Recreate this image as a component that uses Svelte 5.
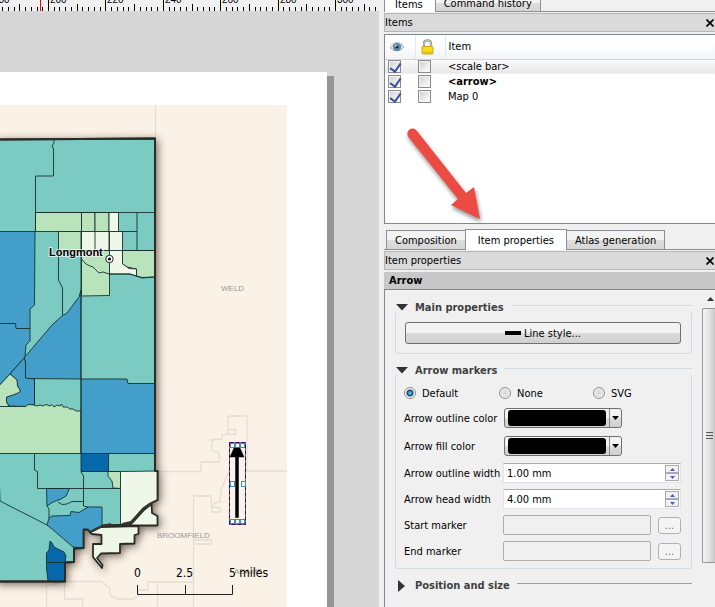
<script>
  const minorTicks = Array.from({ length: 67 }, (_, i) => {
    const n = i - 8;
    return { x: Math.round(48 + n * 5.74), top: n % 10 === 0 ? 0 : n % 5 === 0 ? 4 : 7 };
  });
  const rulerLabels = [180, 200, 220, 240, 260, 280, 300].map((value, i) => ({
    value,
    x: Math.round(50 + (i - 1) * 57.4)
  }));

  const teal = '#7bcbc3';
  const blue = '#439fc9';
  const navy = '#0868ac';
  const green = '#b9e4bb';
  const cream = '#eff8e8';

  const county =
    '-4,139.5 80,139 155,138.5 155,471 157.5,471 157.5,500 150,503.5 143,508.5 132,521.5 125,525 103,525.5 90,532 88,529.5 83.5,529.5 83.5,548 74,548.5 74,562 65,562.5 65,581.5 -4,581.5';
  const smallCream = '151.5,504 144,510 134,521 129,525.5 157.5,525.5 157.5,516 152,513';
  const lowerCream =
    '90,532.5 101,527 138.5,526 138.5,534 134.5,535 134.5,543.5 120,544 120,553 101,553.5 97,558 102.5,565 102,568 93,557 93,544 101.5,544 101.5,535 92,534';

  const zones = [
    [blue, '-4,231.5 35,231.5 34.5,305 30,309 30,341 26,345 25,357 10,374 -4,389'],
    [blue, '81,290 79,297 67,313 62,316 52,325 24,358 25.5,362 25.5,378.5 81,379'],
    [blue, '24,358 25.5,362 25.5,378 34.5,379 34.5,405 28,405 26,406.5 9,406 6.5,402 6.5,397 20.5,391 17.5,386 17,380 10,374'],
    [green, '-4,389 10,374 17,380 17.5,386 20.5,391 18,393 13,395 6.5,397 6.5,402 9,406.5 -4,406.5'],
    [green, '-4,406.5 26,406.5 28,404.5 34,405 37,406 40,405 43,406 46,404.5 50,406 52,404.5 54,407 57,405 60,406 61.5,404 63,407 67,407 70,409 73,409 76,411 81,411 81,453.5 -4,453.5'],
    [blue, '81,379 127,379 128,383.5 154.5,383.5 154.5,453.5 81,453.5'],
    [navy, '81,453.5 108.5,453.5 108.5,471.5 81,471.5'],
    [green, '108,471.5 120.5,471.5 120.5,488.5 113,488 112,481 108,476'],
    [cream, '120.5,471.5 157.5,471 157.5,500 150,503.5 143,508.5 132,521.5 125,525 120.5,524.5'],
    [blue, '46.5,488.5 69.5,488.5 66,496 61,499 53,502 47,506'],
    [blue, '47,525 49,518 52,516 70,515.5 71,511.5 79,512.5 88,507 102,507 102,526 90,532 88,529.5 83.5,529.5 83.5,548 73,547 52,529'],
    [navy, '50,541 52,543 54,547 64,552 66,556 65,563 65,581 48,581 46.5,568 46.5,553 49,550'],
    [green, '35.5,212.5 81.5,212.5 81.5,231.5 35.5,231.5'],
    [green, '81.5,212.5 95,212.5 95,231.5 81.5,231.5'],
    [green, '95,212.5 109,212.5 109,231.5 95,231.5'],
    [cream, '109,212.5 118.5,212.5 118.5,231.5 109,231.5'],
    [green, '58.5,231.5 81.5,231.5 81.5,250.5 58.5,250.5'],
    [cream, '81.5,231.5 109,231.5 109,250.5 81.5,250.5'],
    [green, '81.5,250.5 109.5,250.5 109.5,295.5 81.5,296'],
    [green, '122.5,250.5 154.5,250.5 154.5,277 142,277.5 136.5,276 136.5,269 127,267 122.5,264'],
    [cream, '109.5,231.5 122.5,231.5 122.5,264 127,267 129,268.5 136.5,269 136.5,276 130,274 109.5,274']
  ];

  const tractLines =
    'M54,139V143L52,146 53.5,149V176H35.5V212M35.5,212.5H155M35.5,212V232M137,212V250M58.5,250.5H155M95,231V250M118.5,231.5H137' +
    'M58.5,250V280L62.5,288V315M81.5,259L86,264 90,266 93,267 99,273 103,272 109,274 130,274 136,276 142,278 154,277' +
    'M0,323.5H15.5L16,328.5H30M34.5,379V405M81,231V453M108.5,453.5H155' +
    'M81,471.5H120M34.5,453V470L37.5,471.5V488.5H120.5M81,472L83.5,476V506L88,507M-1,471L0,501 47,525' +
    'M58,502L62,504.5 67,504 72,501.5H83.5M47,506L49,509V518M46.5,562.5H65';

  const boundaries =
    'M155.5,105V138M157,471.5H201V462H219V453L211,450 213,441 210,440 222,439V435L228,434V417L230,416H246L247,417V471H287' +
    'M228,429.5H235.5V434H228M229,471L221,490 220,502 214,503 213,507 220.5,508V512H212L211,496H193.5V607' +
    'M193.5,540H211.5V544H193.5M46.5,607V586L64,581.5H102L110,589V595L118,599H133L138,596V590H148V582H193M157.5,582V607M64.5,581V599H82.5V607';

  const handles = [
    [230, 443], [235, 443], [240, 443],
    [230, 481], [241, 481],
    [230, 519], [235, 519], [240, 519]
  ];

  let items = $state([
    { name: '<scale bar>', visible: true, locked: false },
    { name: '<arrow>', visible: true, locked: false, current: true },
    { name: 'Map 0', visible: true, locked: false }
  ]);
  let marker = $state('Default');
  let widths = $state([
    { id: 'outline-width', label: 'Arrow outline width', value: 1 },
    { id: 'head-width', label: 'Arrow head width', value: 4 }
  ]);
</script>

<main class="composer">
  <section class="canvas" aria-label="Map composition">
    <svg class="ruler" aria-hidden="true">
      {#each minorTicks as t}
        <rect x={t.x} y={t.top} width="1" height={11 - t.top} />
      {/each}
      {#each rulerLabels as l}
        <text x={l.x} y="3">{l.value}</text>
      {/each}
      <rect class="cursor" x="40" y="0" width="1" height="11" />
    </svg>
    <svg class="sheet" viewBox="0 11 379 596" preserveAspectRatio="xMinYMin slice">
      <defs>
        <filter id="soft" x="-20%" y="-20%" width="140%" height="140%">
          <feDropShadow dx="2" dy="2" stdDeviation="4" flood-color="#4a3626" flood-opacity="0.75" />
        </filter>
      </defs>
      <rect x="-10" y="76" width="344" height="540" fill="#969696" />
      <rect x="-10" y="72" width="337" height="540" fill="#fff" />
      <rect x="-10" y="105" width="297" height="510" fill="#faf2e7" />
      <path d={boundaries} fill="none" stroke="#e6ddd2" stroke-width="1.3" />
      <g filter="url(#soft)" stroke="#2a2c26" stroke-width="1.8" stroke-linejoin="round">
        <polygon points={county} fill={teal} />
        <polygon points={smallCream} fill={cream} />
        <polygon points={lowerCream} fill={cream} />
      </g>
      <g stroke="#17312f" stroke-width="0.9" stroke-linejoin="round">
        {#each zones as [fill, points]}
          <polygon {fill} {points} />
        {/each}
        <path d={tractLines} fill="none" />
      </g>
      <polygon points={county} fill="none" stroke="#2a2c26" stroke-width="1.8" stroke-linejoin="round" />
      <path d="M92,531L102,526 111,524M122,524L131,522 143,509 152,503" fill="none" stroke="#3b3632" stroke-width="2" />
      <g class="place">
        <text x="157" y="538">BROOMFIELD</text>
        <text x="221" y="291">WELD</text>
        <text x="234" y="574">ADAMS</text>
      </g>
      <text class="town" x="49" y="256">Longmont</text>
      <circle cx="109.5" cy="259" r="3.7" fill="#fff" stroke="#222" />
      <circle cx="109.5" cy="259" r="1.6" fill="#111" />
      <g class="scale">
        <text x="134" y="577">0</text>
        <text x="176" y="577">2.5</text>
        <text x="229" y="577">5 miles</text>
        <path d="M137.5,585V594.5H232.5V585M185.5,585V594" fill="none" stroke="#222" />
      </g>
      <rect x="229.5" y="442.5" width="16" height="82" fill="none" stroke="#2f8fc4" />
      <rect x="229.5" y="442.5" width="16" height="82" fill="none" stroke="#5a0040" stroke-dasharray="4 2" />
      {#each handles as [x, y]}
        <rect x={x + 0.5} y={y + 0.5} width="4" height={y === 481 ? 5 : 4} fill="#fff" stroke="#3c8ec0" />
      {/each}
      <path d="M235.5,455H238.5V517.5H235.5ZM234,448H240L244,457H230Z" stroke="#000" stroke-width="0.5" />
    </svg>
  </section>

  <aside class="docks">
    <div class="tabs top">
      <button class="tab active">Items</button>
      <button class="tab">Command history</button>
    </div>
    <header class="dock-title">
      <span>Items</span>
      <button class="close" aria-label="Close Items">
        <svg width="8" height="8"><path d="M0.5,0.5L7.5,7.5M7.5,0.5L0.5,7.5" stroke="#000" stroke-width="1.7" /></svg>
      </button>
    </header>
    <div class="tree">
      <table>
        <thead>
          <tr>
            <th class="eye" aria-label="Visible">
              <svg width="16" height="12" viewBox="0 0 16 12">
                <path d="M1,7Q7,0 15,6Q9,13 1,7Z" fill="#f1f4f5" stroke="#a4adb1" />
                <path d="M2,4Q8,-1 14,4" fill="none" stroke="#b9bfc2" />
                <circle cx="8" cy="6" r="3.8" fill="#5d91b7" stroke="#49718e" stroke-width="0.6" />
                <circle cx="8" cy="6" r="1.6" fill="#152839" />
                <circle cx="7" cy="4.7" r="0.8" fill="#fff" />
              </svg>
            </th>
            <th class="lock" aria-label="Locked">
              <svg width="13" height="16" viewBox="0 0 13 16">
                <path d="M3,8V4.5Q3,1.3 6.5,1.3T10,4.5V8" fill="none" stroke="#8c8c8c" stroke-width="2.2" />
                <path d="M3,8V4.5Q3,1.3 6.5,1.3T10,4.5V8" fill="none" stroke="#dedede" stroke-width="0.8" />
                <rect x="1" y="7.5" width="11" height="7.5" rx="1" fill="#f4dc1d" stroke="#c9a70c" />
                <path d="M1.5,13.5H11.5" stroke="#e0b914" />
              </svg>
            </th>
            <th>Item</th>
          </tr>
        </thead>
        <tbody>
          {#each items as item, i}
            <tr class:hover={i === 0} class:current={item.current}>
              <td class="eye"><input type="checkbox" bind:checked={item.visible} aria-label="Show {item.name}" /></td>
              <td class="lock"><input type="checkbox" bind:checked={item.locked} aria-label="Lock {item.name}" /></td>
              <td>{item.name}</td>
            </tr>
          {/each}
        </tbody>
      </table>
      <svg class="pointer" width="90" height="106" aria-hidden="true">
        <path d="M11.500,2.500A5,5 0 0 0 3.500,9L53,71 46,77 75,91 69,59 61,65Z" fill="#ec4b43" />
      </svg>
    </div>
    <div class="tabs">
      <button class="tab">Composition</button>
      <button class="tab active">Item properties</button>
      <button class="tab">Atlas generation</button>
    </div>
    <header class="dock-title">
      <span>Item properties</span>
      <button class="close" aria-label="Close Item properties">
        <svg width="8" height="8"><path d="M0.5,0.5L7.5,7.5M7.5,0.5L0.5,7.5" stroke="#000" stroke-width="1.7" /></svg>
      </button>
    </header>
    <h2>Arrow</h2>
    <div class="scroll">
      <form class="properties">
        <section class="group">
          <h3><svg width="12" height="8"><path d="M0,0H12L6,6.500Z" fill="#333" /></svg><span>Main properties</span></h3>
          <div class="frame single">
            <button type="button" class="wide"><i></i>Line style...</button>
          </div>
        </section>
        <section class="group">
          <h3><svg width="12" height="8"><path d="M0,0H12L6,6.500Z" fill="#333" /></svg><span>Arrow markers</span></h3>
          <div class="frame">
            <div class="radios">
              {#each ['Default', 'None', 'SVG'] as option}
                <label><input type="radio" name="marker" value={option} bind:group={marker} />{option}</label>
              {/each}
            </div>
            {#each ['Arrow outline color', 'Arrow fill color'] as name, i}
              <div class="row color">
                <label for="color-{i}">{name}</label>
                <button type="button" id="color-{i}" class="swatch">
                  <i></i><svg width="7" height="4"><path d="M0,0H7L3.500,4Z" /></svg>
                </button>
              </div>
            {/each}
            {#each widths as w}
              <div class="row">
                <label for={w.id}>{w.label}</label>
                <div class="spin">
                  <input id={w.id} type="text" value="{w.value.toFixed(2)} mm" />
                  <div class="steps">
                    <button type="button" aria-label="Increase" onclick={() => (w.value += 1)}>
                      <svg width="5" height="3"><path d="M0,3L2.500,0 5,3Z" /></svg>
                    </button>
                    <button type="button" aria-label="Decrease" onclick={() => (w.value -= 1)}>
                      <svg width="5" height="3"><path d="M0,0L2.500,3 5,0Z" /></svg>
                    </button>
                  </div>
                </div>
              </div>
            {/each}
            {#each ['Start marker', 'End marker'] as name, i}
              <div class="row">
                <label for="marker-{i}">{name}</label>
                <input id="marker-{i}" class="path" type="text" disabled />
                <button type="button" class="browse" disabled>...</button>
              </div>
            {/each}
          </div>
        </section>
        <section class="group closed">
          <h3><svg width="12" height="12"><path d="M2,0V12L9,6Z" fill="#333" /></svg><span>Position and size</span></h3>
        </section>
        <section class="group closed">
          <h3><svg width="12" height="12"><path d="M2,0V12L9,6Z" fill="#333" /></svg></h3>
        </section>
      </form>
      <div class="scrollbar" aria-hidden="true">
        <div class="up"><svg width="7" height="4"><path d="M0,4L3.500,0 7,4Z" fill="#333" /></svg></div>
        <div class="thumb"><i></i><i></i><i></i></div>
      </div>
    </div>
  </aside>
</main>

<style>
  :global(body) { margin: 0; background: #f0f0f0; }
  .composer, .composer * { box-sizing: border-box; }
  .composer {
    display: grid;
    grid-template-columns: minmax(0, 1fr) 331px;
    gap: 5px;
    height: 100vh;
    overflow: hidden;
    background: #f0f0f0;
    color: #000;
    font: 11px/15px "DejaVu Sans Condensed", "DejaVu Sans", sans-serif;
  }
  button, input { font: inherit; color: inherit; margin: 0; }
  .canvas { display: flex; flex-direction: column; min-height: 0; background: #d7d7d7; }
  .ruler { display: block; flex: none; width: 100%; height: 11px; background: #f0f0f0; overflow: hidden; font: 10px "Liberation Sans", sans-serif; }
  .cursor { fill: #f00; }
  .sheet { display: block; flex: 1; width: 100%; min-height: 0; }
  .place { font: 8px "Liberation Sans", sans-serif; fill: #9d9892; }
  .town { font: bold 11px "Liberation Sans", sans-serif; paint-order: stroke; stroke: #fff; stroke-width: 2px; stroke-opacity: 0.7; }
  .scale { font: 12px "DejaVu Sans Condensed", sans-serif; }

  .docks { display: flex; flex-direction: column; min-width: 0; min-height: 0; }
  .tabs { display: flex; align-items: flex-end; flex: none; height: 22px; margin-top: 4px; padding-left: 2px; border-bottom: 1px solid #8b8e94; }
  .tabs.top { height: 12px; margin-top: 0; padding-left: 0; }
  .tab { height: 19px; padding: 0 8px; border: 1px solid #8b8e94; border-bottom: 0; border-right-width: 0; background: linear-gradient(#f3f3f3 50%, #dedede 50%, #d6d6d6); white-space: nowrap; }
  .tab:last-child { border-right-width: 1px; }
  .tab.active { height: 21px; padding: 0 12px; margin-bottom: -1px; background: #fff; border-right-width: 1px; }
  .tab.active + .tab { border-left: 0; }
  .top .tab { height: 17px; }
  .top .tab.active { padding: 0 12px 0 10px; }
  .dock-title { display: flex; align-items: center; justify-content: space-between; flex: none; height: 19px; margin-top: 1px; padding: 0 1px 0 0; background: #dadada; border: 1px solid #b6b6b6; border-right: 0; }
  .close { display: flex; padding: 0; border: 0; background: none; }
  .tree { position: relative; flex: none; height: 190px; margin-top: 2px; background: #fff; border: 1px solid #7f8790; border-right: 0; }
  table { width: 100%; border-collapse: collapse; table-layout: fixed; }
  th, td { padding: 0 0 0 3px; height: 15px; text-align: left; font-weight: normal; line-height: 14px; }
  th { height: 24px; background: linear-gradient(#fff 40%, #f2f3f5); border-bottom: 1px solid #d5d5d5; border-left: 1px solid #e3e8ee; }
  th svg { display: block; }
  .eye { width: 30px; }
  .lock { width: 30px; }
  th.eye { border-left: 0; padding-left: 4px; }
  th.lock { padding-left: 5px; }
  .hover td { background: linear-gradient(#fafafa, #e8e8e8); }
  .current td { font-weight: bold; }
  input[type='checkbox'] { appearance: none; display: block; width: 13px; height: 13px; border: 1px solid #8b8b8b; background: linear-gradient(135deg, #c9ced4, #f7f7f7 80%); box-shadow: inset 0 0 0 1px #f4f4f4; }
  input[type='checkbox']:checked::after { content: ''; display: block; width: 5px; height: 9px; margin: 0 0 0 3px; border: solid #3c529c; border-width: 0 2px 2px 0; transform: rotate(35deg); }
  .pointer { position: absolute; left: 20px; top: 93px; overflow: visible; filter: drop-shadow(1px 3px 2px rgb(0 0 0 / 0.45)); }

  h2 { flex: none; margin: 2px 0 0; padding: 0 5px; height: 17px; background: #c8c8c8; font-size: 11px; line-height: 17px; }
  .scroll { display: flex; flex: 1; min-height: 0; overflow: hidden; border-top: 1px solid #7f8790; border-left: 1px solid #7f8790; }
  .properties { flex: 1; min-width: 0; padding: 10px 10px 0 10px; }
  .group { margin-bottom: 9px; }
  h3 { display: flex; align-items: center; margin: 0; height: 15px; gap: 7px; color: #404040; font-size: 11px; line-height: 15px; }
  h3 svg { flex: none; margin-left: 1px; }
  h3::after { content: ''; flex: 1; height: 1px; margin-bottom: 4px; background: #d3dae1; }
  .frame { padding: 8px 10px 4px 8px; margin-top: -4px; border: 1px solid #d3dae1; border-top: 0; border-radius: 3px; }
  .frame.single { padding: 11px 10px 9px 9px; }
  .wide { display: flex; align-items: center; justify-content: center; gap: 3px; width: 100%; height: 22px; border: 1px solid #707070; border-radius: 3px; background: linear-gradient(#f3f3f3 50%, #dcdcdc 50%, #cfcfcf); }
  .wide i { width: 16px; height: 4px; background: #000; }
  .radios { display: grid; grid-template-columns: 95px 94px 1fr; height: 22px; align-items: center; }
  .radios label { display: flex; align-items: center; gap: 6px; }
  input[type='radio'] { appearance: none; width: 12px; height: 12px; border: 1px solid #8e8f8f; border-radius: 50%; background: radial-gradient(circle, #d5d5d5, #f7f7f7); }
  input[type='radio']:checked { background: radial-gradient(circle, #4cb6e8 0 1px, #123c5c 3px, #f4f4f4 4px); }
  .row { display: flex; align-items: center; height: 26px; }
  .row.color { height: 28px; }
  .row > label { flex: none; width: 99px; white-space: nowrap; }
  .swatch { display: flex; align-items: center; width: 118px; height: 20px; margin-left: 1px; padding: 0 0 0 3px; border: 1px solid #707070; border-radius: 3px; background: linear-gradient(#f3f3f3 50%, #dcdcdc 50%, #d0d0d0); }
  .swatch i { width: 98px; height: 16px; border-radius: 3px; background: #000; margin-right: 3px; }
  .swatch svg { box-sizing: content-box; padding: 7px 0 7px 2px; border-left: 1px solid #888; }
  .spin { display: flex; flex: 1; min-width: 0; height: 20px; padding: 1px; border: 1px solid #e2e3ea; border-top-color: #abadb3; background: #fff; }
  .spin input { flex: 1; min-width: 0; padding: 0 0 0 2px; border: 0; background: none; }
  .steps { display: flex; flex-direction: column; width: 14px; }
  .steps button { display: flex; align-items: center; justify-content: center; height: 8px; padding: 0; border: 1px solid #a9abb0; background: #f1f1f1; }
  .steps svg { fill: #4a62b0; }
  .path { flex: 1; min-width: 0; height: 20px; border: 1px solid #afafaf; border-radius: 2px; background: #f0f0f0; }
  .browse { width: 23px; height: 17px; margin-left: 7px; padding: 0; border: 1px solid #adb2b5; border-radius: 3px; background: #f4f4f4; color: #75708a; line-height: 13px; }
  .closed { margin-bottom: 12px; }
  .closed h3::after { background: #a0a0a0; }
  .scrollbar { flex: none; width: 13px; background: #f0f0f0; }
  .up { display: flex; align-items: center; justify-content: center; height: 18px; padding-left: 4px; }
  .thumb { display: flex; flex-direction: column; align-items: center; justify-content: center; gap: 2px; height: 255px; border: 1px solid #979797; border-right: 0; border-radius: 2px 0 0 2px; background: linear-gradient(90deg, #f5f5f5, #e3e3e3 50%, #c8c8c8); }
  .thumb i { width: 7px; height: 1px; background: #555; }
</style>
